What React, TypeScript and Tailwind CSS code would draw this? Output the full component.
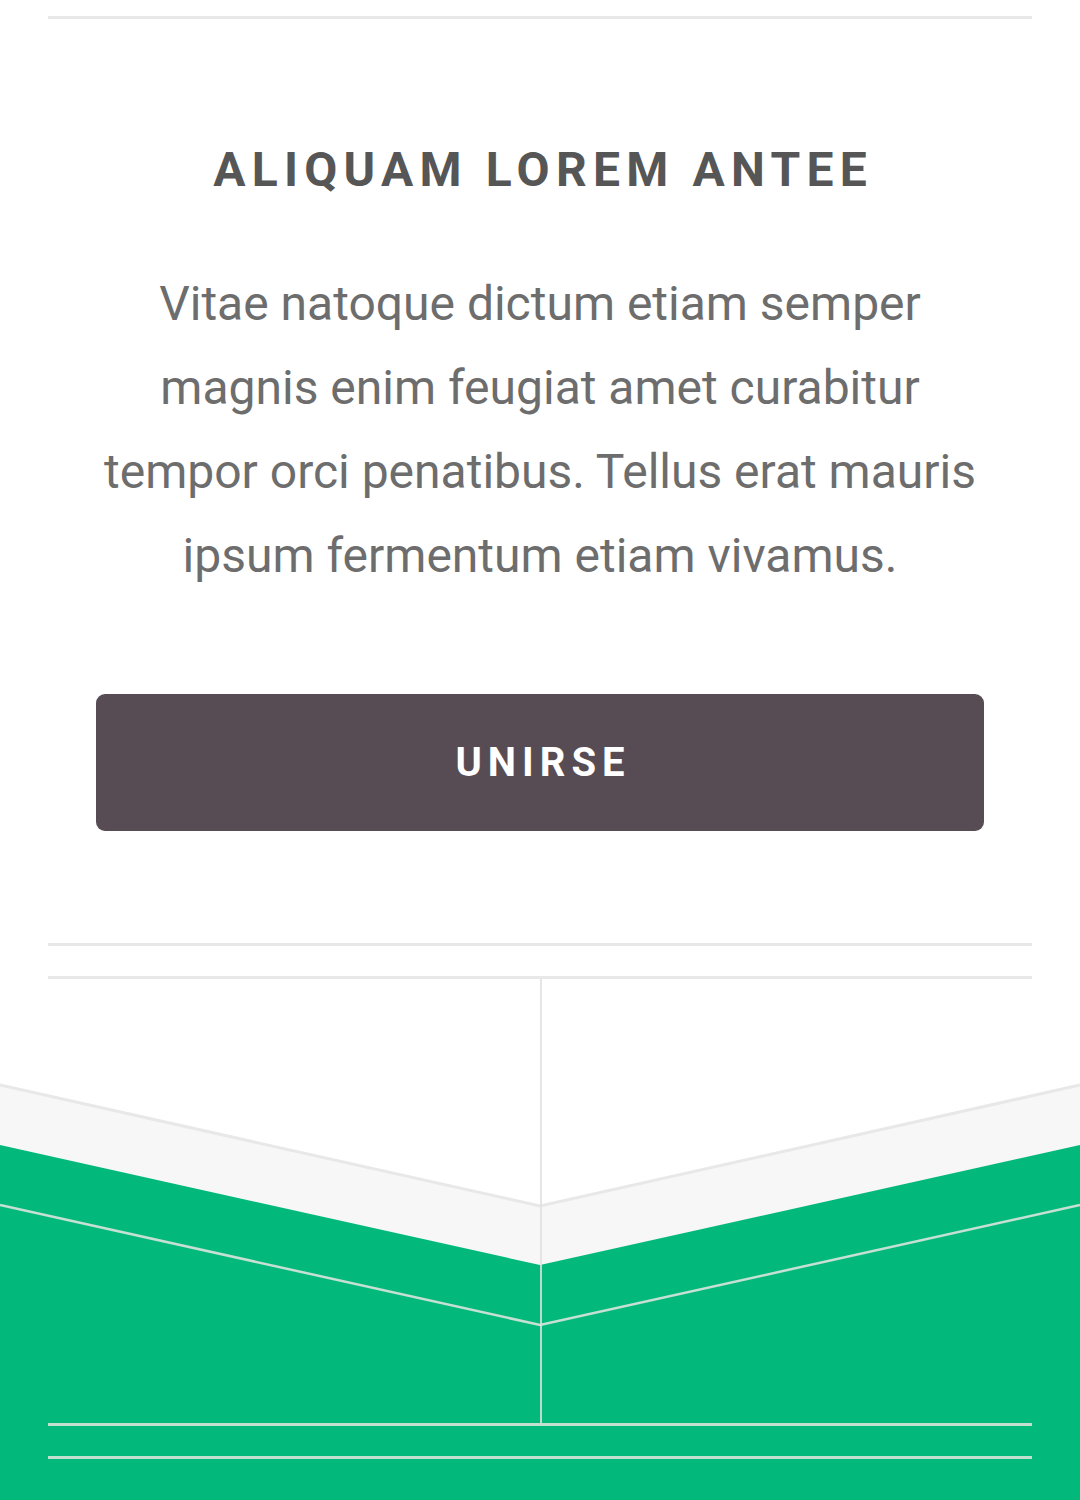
export default function App() {
  return (
    <div className="relative w-[1080px] h-[1500px] overflow-hidden bg-white font-['Roboto',sans-serif]">
      {/* chevron background */}
      <svg
        className="absolute left-0 top-[944px]"
        width="1080"
        height="556"
        viewBox="0 0 1080 556"
      >
        <polygon points="0,141 540,261 1080,141 1080,556 0,556" fill="#f7f7f7" />
        <polyline points="0,141 540,262 1080,141" fill="none" stroke="#e8e8e8" strokeWidth="3" />
        <polygon points="0,201 540,321 1080,201 1080,556 0,556" fill="#02b97b" />
        <polyline points="0,261 540,381 1080,261" fill="none" stroke="#c6e0d3" strokeWidth="2.5" />
      </svg>

      <div className="relative mx-12 pt-4">
        <div className="h-[3px] bg-[#e8e8e8]" />

        <div className="flex flex-col items-center pt-[127px]">
          <h2 className="text-[48px] leading-[48px] font-bold tracking-[0.13em] text-[#565656] pl-[0.13em]">
            ALIQUAM LOREM ANTEE
          </h2>
          <p className="mt-[68px] w-[888px] text-center text-[48px] leading-[84px] text-[#6d6d6d]">
            Vitae natoque dictum etiam semper magnis enim feugiat amet curabitur tempor orci
            penatibus. Tellus erat mauris ipsum fermentum etiam vivamus.
          </p>
          <button className="mt-[96px] w-[888px] h-[137px] rounded-[9px] bg-[#574c54] text-white text-[40px] font-bold tracking-[0.15em] pl-[0.15em]">
            UNIRSE
          </button>
        </div>

        <div className="mt-[112px] h-[3px] bg-[#e8e8e8]" />
        <div className="mt-[30px] h-[3px] bg-[#e8e8e8]" />

        <div className="grid grid-cols-2 h-[444px]">
          <div />
          <div className="border-l-2 border-[rgba(225,225,225,0.85)]" />
        </div>

        <div className="h-[3px] bg-[#c2dfd0]" />
        <div className="mt-[30px] h-[3px] bg-[#c2dfd0]" />
      </div>
    </div>
  )
}
